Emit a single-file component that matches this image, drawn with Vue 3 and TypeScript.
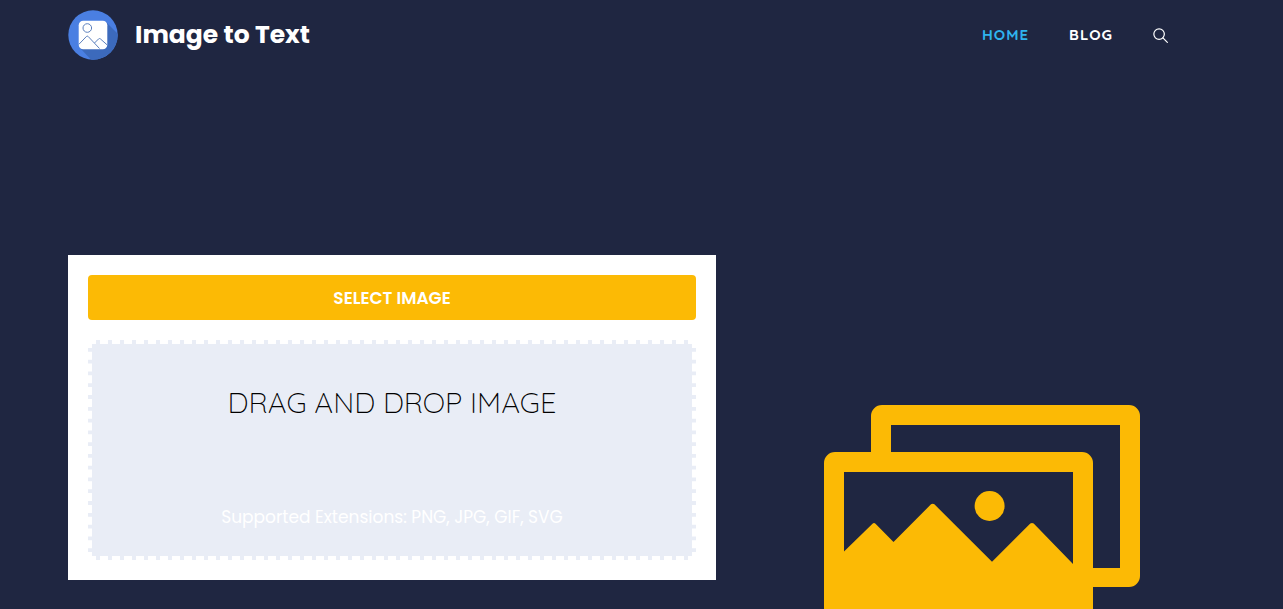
<script setup lang="ts">
import { ref } from 'vue'

interface NavItem {
  label: string
  href: string
  active: boolean
}

const navItems: NavItem[] = [
  { label: 'Home', href: '#home', active: true },
  { label: 'Blog', href: '#blog', active: false },
]

const extensions: string[] = ['PNG', 'JPG', 'GIF', 'SVG']
const picker = ref<HTMLInputElement | null>(null)

function openPicker(): void {
  picker.value?.click()
}
</script>

<template>
  <div class="page">
    <header class="header">
      <a class="brand" href="#home">
        <svg class="logo" viewBox="0 0 50 50" aria-hidden="true">
          <defs>
            <clipPath id="disc"><circle cx="25" cy="25" r="24.7" /></clipPath>
          </defs>
          <circle cx="25" cy="25" r="24.7" fill="#4a7fe2" />
          <path clip-path="url(#disc)" d="M38 12L58 32V58H31L12 38Z" fill="#3c6abc" />
          <rect x="10.700" y="10.700" width="28.600" height="28.600" rx="4.500" fill="#fff" />
          <g fill="none" stroke="#5c80bd" stroke-width="1">
            <circle cx="19.300" cy="18" r="4.300" />
            <path d="M10.700 34.500L18.400 26.500Q19.300 25.700 20.200 26.500L31.500 38.500" />
            <path d="M26.500 33L30.600 28.900Q31.500 28.100 32.400 28.900L39.300 35" />
          </g>
        </svg>
        <span class="title">Image to Text</span>
      </a>
      <nav class="nav" aria-label="Primary">
        <a
          v-for="item in navItems"
          :key="item.label"
          class="nav-link"
          :class="{ active: item.active }"
          :href="item.href"
        >{{ item.label }}</a>
        <button class="search" type="button" aria-label="Search">
          <svg viewBox="0 0 16 16" aria-hidden="true">
            <circle cx="6.500" cy="6.500" r="5.600" />
            <path d="M10.600 10.600L15.300 15.300" />
          </svg>
        </button>
      </nav>
    </header>

    <main class="hero">
      <section class="card">
        <button class="select" type="button" @click="openPicker">Select Image</button>
        <input ref="picker" type="file" accept="image/*" aria-label="Image file" hidden />
        <div class="drop">
          <h1 class="drop-title">Drag and drop image</h1>
          <p class="drop-note">Supported Extensions: {{ extensions.join(', ') }}</p>
        </div>
      </section>
      <div class="art">
        <svg class="pictures" viewBox="0 0 316 229" aria-hidden="true">
          <path
            fill-rule="evenodd"
            d="M47 47V11A11 11 0 0 1 58 0H305A11 11 0 0 1 316 11V171A11 11 0 0 1 305 182H269V163H296V20H67V47H258A11 11 0 0 1 269 58V218A11 11 0 0 1 258 229H11A11 11 0 0 1 0 218V58A11 11 0 0 1 11 47ZM20 67V146.500L48.500 118.700Q50 117.500 51.500 118.700L69.500 137L107 99.300Q108.700 98 110.400 99.300L168 156.800L206.300 118.600Q208 117.200 209.700 118.600L249 159V67Z"
          />
          <circle cx="165.600" cy="101" r="15" />
        </svg>
      </div>
    </main>
  </div>
</template>

<style>
body {
  margin: 0;
  background: #1f2641;
}
</style>

<style scoped>
.page {
  box-sizing: border-box;
  height: 100vh;
  overflow: hidden;
  padding: 0 85px 0 68px;
  background: #1f2641;
  color: #fff;
  font-family: Poppins, Inter, "Open Sans", sans-serif;
}
.header {
  display: flex;
  align-items: center;
  justify-content: space-between;
  height: 70px;
  padding-right: 30px;
}
.brand {
  display: flex;
  align-items: center;
  gap: 17px;
  color: #fff;
  text-decoration: none;
}
.logo {
  width: 50px;
  height: 50px;
}
.title {
  font-size: 25px;
  line-height: 38px;
  font-weight: 700;
}
.nav {
  display: flex;
  align-items: center;
  gap: 40px;
}
.nav-link {
  color: #fff;
  font-family: Quicksand, Lato, sans-serif;
  font-size: 15px;
  line-height: 20px;
  font-weight: 700;
  letter-spacing: 1px;
  text-transform: uppercase;
  text-decoration: none;
}
.nav-link.active {
  color: #2fb4ee;
}
.search {
  display: flex;
  padding: 0;
  border: 0;
  background: none;
  cursor: pointer;
}
.search svg {
  width: 15px;
  height: 15px;
  fill: none;
  stroke: #fff;
  stroke-width: 1.300;
  stroke-linecap: round;
}
.hero {
  display: grid;
  grid-template-columns: minmax(0, 648fr) minmax(0, 482fr);
  align-items: start;
  padding-top: 185px;
}
.card {
  display: flex;
  flex-direction: column;
  gap: 20px;
  padding: 20px;
  background: #fff;
}
.select {
  height: 45px;
  border: 0;
  border-radius: 4px;
  background: #fcba05;
  color: #fff;
  font-family: inherit;
  font-size: 17px;
  font-weight: 600;
  text-transform: uppercase;
  cursor: pointer;
}
.drop {
  display: flex;
  flex-direction: column;
  justify-content: space-between;
  box-sizing: border-box;
  min-height: 220px;
  padding: 38px 20px 26px;
  border: 4px dashed #fff;
  background: #e9edf6;
  text-align: center;
}
.drop-title {
  margin: 0;
  color: #000;
  font-family: Quicksand, Lato, sans-serif;
  font-size: 29px;
  line-height: 40px;
  font-weight: 300;
  text-transform: uppercase;
}
.drop-note {
  margin: 0;
  font-size: 17px;
  line-height: 26px;
}
.art {
  display: flex;
  justify-content: center;
  padding: 150px 0 0 50px;
}
.pictures {
  width: 316px;
  height: 229px;
  fill: #fcba05;
}
</style>
